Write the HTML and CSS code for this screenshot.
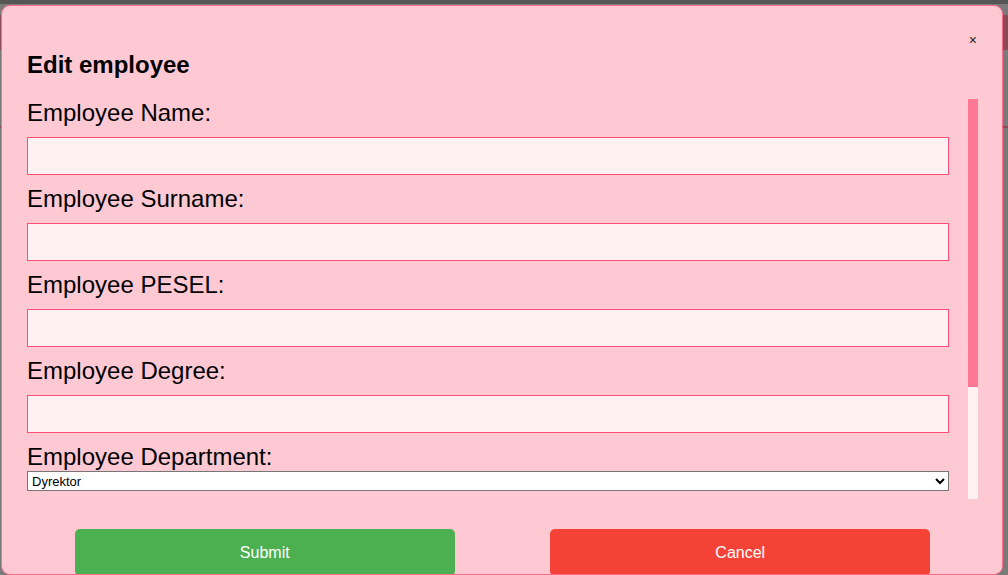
FILE: index.html
```html
<!DOCTYPE html>
<html lang="en">
<head>
<meta charset="utf-8">
<title>Edit employee</title>
<link rel="stylesheet" href="styles.css">
</head>
<body>
  <div class="page">
    <div class="page-top"></div>
    <div class="page-header"></div>
    <div class="page-line"></div>
  </div>

  <div class="modal">
    <div class="modal-close-row">
      <button class="modal-close" type="button">×</button>
    </div>
    <h2 class="modal-title">Edit employee</h2>
    <div class="modal-body">
      <form class="modal-form">
        <label class="field-label">Employee Name:</label>
        <input class="field-input" type="text">
        <label class="field-label">Employee Surname:</label>
        <input class="field-input" type="text">
        <label class="field-label">Employee PESEL:</label>
        <input class="field-input" type="text">
        <label class="field-label">Employee Degree:</label>
        <input class="field-input" type="text">
        <label class="field-label">Employee Department:</label>
        <select class="field-select">
          <option>Dyrektor</option>
        </select>
      </form>
      <div class="scroll-track">
        <div class="scroll-thumb"></div>
      </div>
    </div>
    <div class="modal-actions">
      <button class="btn btn-submit" type="button">Submit</button>
      <button class="btn btn-cancel" type="button">Cancel</button>
    </div>
  </div>
</body>
</html>
```
FILE: styles.css
```css
html, body {
  margin: 0;
  padding: 0;
  height: 100%;
}

body {
  background: #7a7a7a;
  font-family: "Liberation Sans", Arial, sans-serif;
  overflow: hidden;
}

.page {
  display: flex;
  flex-direction: column;
}

.page-top {
  height: 4px;
  background: #565656;
}

.page-header {
  margin-top: 11px;
  height: 35px;
  background: #8a4b59;
}

.page-line {
  margin-top: 76px;
  height: 2px;
  background: #8a4b59;
}

.modal {
  position: absolute;
  top: 5px;
  left: 1px;
  width: 1002px;
  height: 570px;
  box-sizing: border-box;
  background: #ffc9d3;
  border: 1px solid #ff6b8b;
  border-radius: 9px;
  padding: 25px 24px 0 25px;
  overflow: hidden;
  display: flex;
  flex-direction: column;
}

.modal-close-row {
  display: flex;
  justify-content: flex-end;
  height: 18px;
  padding-right: 1px;
}

.modal-close {
  background: none;
  border: none;
  padding: 0;
  margin: 0;
  font-family: "Liberation Sans", Arial, sans-serif;
  font-size: 14px;
  line-height: 18px;
  color: #222;
  cursor: pointer;
}

.modal-title {
  margin: 2px 0 20px 0;
  font-size: 24px;
  font-weight: bold;
  color: #000;
}

.modal-body {
  display: flex;
  height: 400px;
  flex-shrink: 0;
}

.modal-form {
  flex: 1;
  overflow: hidden;
  padding-right: 19px;
  display: flex;
  flex-direction: column;
}

.scroll-track {
  width: 10px;
  background: #fff0f3;
  display: flex;
  flex-direction: column;
}

.scroll-thumb {
  height: 288px;
  background: #ff7893;
}

.field-label {
  display: block;
  font-size: 24px;
  color: #000;
  flex-shrink: 0;
}

.field-input {
  flex-shrink: 0;
  box-sizing: border-box;
  width: 100%;
  height: 38px;
  margin: 10px 0;
  border: 1px solid #ff4f76;
  background: #fff0f3;
  font-family: "Liberation Sans", Arial, sans-serif;
  font-size: 16px;
  padding: 6px 10px;
  outline: none;
}

.field-select {
  flex-shrink: 0;
  box-sizing: border-box;
  width: 100%;
  height: 20px;
  margin: 0;
  font-family: "Liberation Sans", Arial, sans-serif;
  font-size: 13px;
  border: 1px solid #767676;
  border-radius: 0;
  background: #fff;
  color: #000;
}

.modal-actions {
  display: flex;
  justify-content: space-around;
  margin-top: 30px;
  flex-shrink: 0;
}

.btn {
  width: 40%;
  height: 47px;
  padding: 0;
  border: none;
  border-radius: 5px;
  color: #fff;
  font-family: "Liberation Sans", Arial, sans-serif;
  font-size: 16px;
  cursor: pointer;
}

.btn-submit {
  background: #4caf50;
}

.btn-cancel {
  background: #f44336;
}
```
